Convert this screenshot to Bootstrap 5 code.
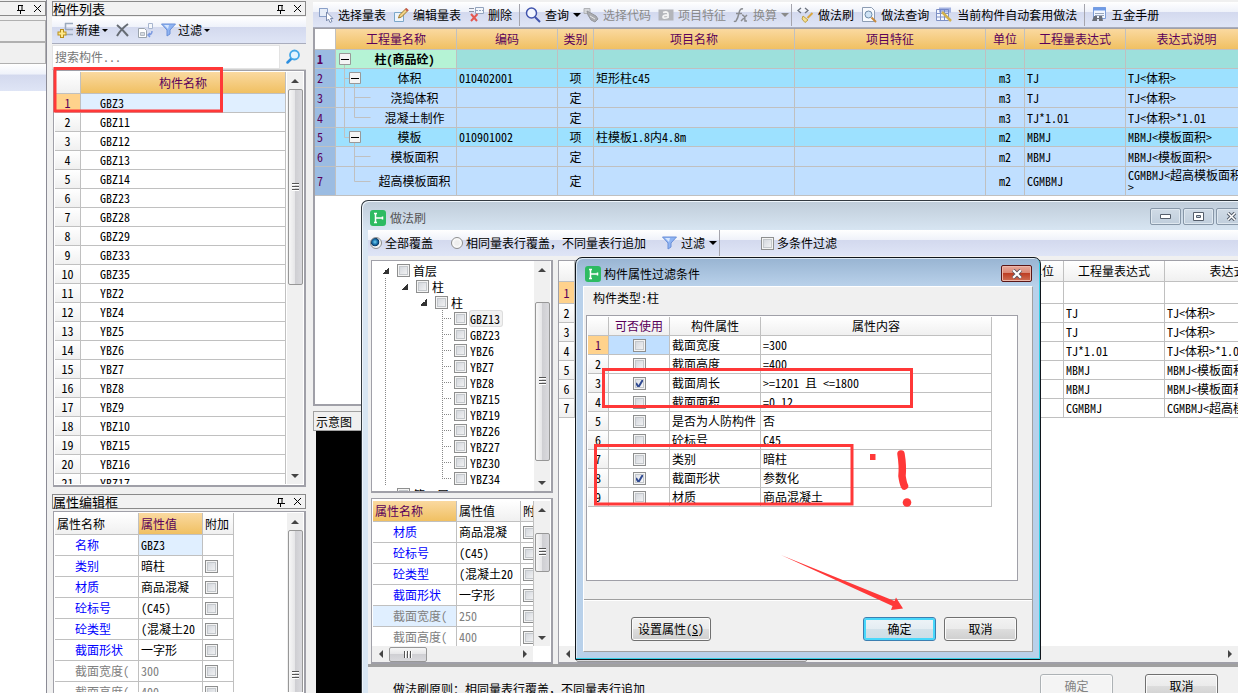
<!DOCTYPE html>
<html lang="zh-CN">
<head>
<meta charset="utf-8">
<meta name="viewport" content="width=device-width, initial-scale=1">
<title>做法刷</title>
<link href="https://cdn.jsdelivr.net/npm/bootstrap@5.3.0/dist/css/bootstrap.min.css" rel="stylesheet">
<style>
:root{--line:#c0c0c0;--edge:#a0a0a8;--face:#f0f0f0;--orange:linear-gradient(#fad9a0,#f0c062);--grey:linear-gradient(#fff,#f0f0f0);--tool:linear-gradient(#fff 0,#eff2fa 38%,#d3d9ee 40%,#dfe5f6 100%)}
body{height:100vh;overflow:hidden;position:relative;background:var(--face);color:#000;font:12px/14px "Noto Sans CJK SC",sans-serif;font-feature-settings:"hwid"}
.fullpunct{font-feature-settings:normal}
button,input{font-feature-settings:inherit}
svg{display:block;flex:none}
/* columns */
.col-edge{width:47px;flex:none;border-right:1px solid #8b8b95}
.col-side{width:254px;flex:none;margin-left:5px}
.col-main{margin-left:7px;padding-top:2px;min-width:0}
.pane-title{height:15px;flex:none;border:1px solid #8a8a8a;background:#f2f2f2;font-size:13px;line-height:13px;padding-right:3px}
.pane-title h2{font:inherit;margin:0}
.col-edge .pane-title{margin-top:1px;border-left:0}
.col-side>.pane-title:first-child{margin-top:1px}
.col-side>.prop-title{margin:7px 0 2px}
.title-btns{gap:8px}
.bare{border:0;background:none;padding:0;color:inherit}
.edge-box{height:22px;border:1px solid #b0b0b0;border-left:0}
.toolbar-strip{background:var(--tool)}
.edge-strip{height:27px}
.list-tools{height:27px;margin-top:1px;border-bottom:1px solid #a9adbd;padding-left:5px}
.main-tools{height:26px;border-bottom:1px solid #a9adbd;padding-left:5px;flex:none}
.btn.tool{--bs-btn-padding-x:0;--bs-btn-padding-y:0;--bs-btn-font-size:12px;--bs-btn-line-height:14px;--bs-btn-color:#000;--bs-btn-border-width:0;--bs-btn-disabled-color:#8a8a8a;--bs-btn-disabled-opacity:1;display:flex;align-items:center;gap:4px;white-space:nowrap;margin-right:7px}
.btn.tool.menu{margin-right:2px}
.list-tools .btn.tool{gap:2px}
.caret{width:0;height:0;border:4px solid transparent;border-top-color:currentColor;border-bottom:0}
.caret.sm{border-width:3px 3px 0}
.vsep{width:1px;height:22px;background:#a5a5ad;margin-right:5px}
.searchrow{height:26px;border-bottom:1px solid #d0d0d0}
.searchrow input{border:1px solid #e3e3e3;height:24px;width:228px;padding:0 2px;font-size:12px;background:#fff}
.searchrow input::placeholder{color:#777;opacity:1}
.frame{border:1px solid var(--edge);background:#fff;overflow:hidden;min-height:0}
.deep{border-width:1px 2px 2px 1px}
.list-frame{margin-left:1px;padding:1px}
.list-frame .vbar{margin-left:1px}
/* grids */
table.grid{border-collapse:separate;border-spacing:0;table-layout:fixed;width:100%;margin:0;line-height:12px}
.grid th,.grid td{border:0 solid var(--line);border-width:0 1px 1px 0;padding:0 2px;height:19px;font-weight:400;white-space:nowrap;overflow:hidden;vertical-align:middle}
.grid thead th{background:var(--grey);text-align:center}
.grid tbody th{background:var(--grey);text-align:center}
.grid thead th.hot{background:var(--orange);color:#5a005a}
.grid tbody th.hot{background:#ffd28c;color:#5a005a}
.grid td.sel{background:#e0efff}
.grid .pickcell{background:#c0dfff}
.g-list thead th{height:22px}
.g-list td{padding-left:19px}
.g-prop th,.g-prop td{height:21px}
.g-prop thead th{text-align:left}
.g-prop td:first-child{padding-left:20px;color:#00f}
.g-prop .dim td{color:#808080}
.g-prop td:last-child{padding-left:2px}
table.side-prop{width:179px}
.side-prop thead th{height:22px}
.c26{width:26px}.c84{width:84px}.c64{width:64px}.c31{width:31px}.c21{width:21px}.c121{width:121px}.c101{width:101px}.c36{width:36px}.c201{width:201px}.c191{width:191px}.c39{width:39px}.c13{width:13px}.c61{width:61px}.c91{width:91px}.c16{width:16px}.c43{width:43px}.c150{width:150px}
table.g-main{width:calc(100% + 10px)}
.g-main thead th{background:var(--orange);color:#5a005a;height:21px}
.g-main thead th:first-child{background:#fff}
.g-main tbody th{background:#9bbce2;color:#5a005a;text-align:left}
.g-main td{background:#c0dfff}
.g-main td:nth-child(2){padding:0}
.g-main td:nth-child(9){white-space:normal}
.g-main .top td{background:#9de0dc}
.g-main .top td:nth-child(2){background:#b5f3d5}
.g-main .item td{background:#9de1ff}
.g-main .tall td,.g-main .tall th{height:20px}
.g-main .wrap2 td,.g-main .wrap2 th{height:29px}
.g-main .top td,.g-main .top th{font-weight:700}
.tn{display:flex;align-items:center}
.tn span{flex:1;text-align:center}
.tn svg{stroke:var(--line);fill:none}
.main-frame{flex:1 1 0;border-width:1px 0 2px 2px}
.g-brush thead th{height:21px}
.g-brush tbody tr:first-child>*{height:22px}
table.g-brush{width:756px}
.g-filter thead th{height:19px}
.g-filter .purple{color:#5a005a}
/* check boxes and radios */
.cbx{appearance:none;display:block;flex:none;width:13px;height:13px;margin:0;border:1px solid #8e8f8f;box-shadow:inset 0 0 0 1px #f4f4f4,inset 0 0 0 2px #c4c8cc;background:linear-gradient(135deg,#cdd1d8,#f8f8f8)}
.cbx:checked{background:url("data:image/svg+xml,%3Csvg xmlns='http://www.w3.org/2000/svg' viewBox='0 0 11 11'%3E%3Cpath d='M2 5 4.500 9 9 1.500' fill='none' stroke='%23314b92' stroke-width='2'/%3E%3C/svg%3E") center/11px no-repeat,linear-gradient(135deg,#d6dae2,#fff)}
.grid .cbx.mid{margin:0 auto}
.rad{appearance:none;width:12px;height:12px;margin:0;border:1px solid #8e8f8f;border-radius:50%;background:radial-gradient(#eee 30%,#fafafa 60%)}
.rad:checked{background:radial-gradient(circle at 40% 40%,#6fd3f5 0,#1b6fa8 30%,#0b3a66 45%,#f4f4f4 55%)}
/* scroll bars */
.vbar{width:16px;flex:none;background:#f0f0f0;display:flex;flex-direction:column;align-items:center}
.hbar{height:16px;flex:none;background:#f0f0f0;display:flex;align-items:center}
.arw{flex:0 0 17px;width:17px;display:flex;align-items:center;justify-content:center}
.arw::before{content:"";border:4px solid transparent}
.arw.up::before{border-bottom-color:#444;border-top:0}
.arw.dn::before{border-top-color:#444;border-bottom:0}
.arw.lf::before{border-right-color:#444;border-left:0}
.arw.rt::before{border-left-color:#444;border-right:0}
.thumb{border:1px solid #979797;border-radius:2px;display:flex;align-items:center;justify-content:center}
.vbar .thumb{width:15px;background:linear-gradient(90deg,#f7f7f7 0,#e6e6e8 45%,#cfcfd3 50%,#dadade)}
.hbar .thumb{height:15px;background:linear-gradient(#f7f7f7 0,#e6e6e8 45%,#cfcfd3 50%,#dadade)}
.vbar .thumb::before{content:"";width:7px;height:8px;background:repeating-linear-gradient(#555 0 1px,#fff 1px 2px,transparent 2px 3px)}
.hbar .thumb::before{content:"";width:8px;height:7px;background:repeating-linear-gradient(90deg,#555 0 1px,#fff 1px 2px,transparent 2px 3px)}
.f195{flex:195}.f183{flex:183}.f24{flex:24}.f158{flex:158}.f14{flex:14}.f37{flex:37}.f56{flex:56}.f290{flex:0 0 290px}.f39{flex:39}.f98{flex:98}.f232{flex:232}.f420{flex:420}
.r418{flex:418 1 0}.r181{flex:181 1 0}.r234{flex:234 1 0}.r165{flex:165 1 0}
.me-1px{margin-right:1px}
.hb-left{margin-right:18px}
/* windows */
.win-brush{position:absolute;left:361px;top:200px;right:0;bottom:0;border:1px solid #333a40;border-width:1px 0 0 1px;border-top-left-radius:7px;background:linear-gradient(#bfccd9,#d8e6f3 30px);padding-left:6px;box-shadow:inset 1px 1px 0 #eef5fb;overflow:hidden}
.win-title{height:29px;gap:4px}
.win-title h1{font:inherit;margin:0}
.win-brush .win-title{padding-left:2px;color:#555;padding-top:4px}
.win-btns{gap:2px;margin-right:-9px;margin-bottom:2px}
.wbtn{width:31px;height:17px;border:1px solid #8797a8;border-radius:2px;background:linear-gradient(#d0dbe6,#c0cedc);box-shadow:inset 0 0 0 1px #dfe8f0;padding:0;display:flex;align-items:center;justify-content:center}
.brush-bar{height:26px;padding-left:2px;white-space:nowrap;flex:none}
.brush-bar label{margin-left:3px}
.brush-bar .gap-mode{margin-left:18px}
.brush-bar .gap-filter{margin-left:16px}
.brush-bar .gap-multi{margin-left:36px}
.brush-body{background:var(--face);padding-top:4px;min-height:0}
.split-left{width:182px;margin-left:3px;gap:5px}
.split-right{margin-left:5px;min-width:0}
.prop-scroll{padding:2px 0 0 1px;min-height:0}
.tree,.tree ul{list-style:none;margin:0;padding:0}
.tree{padding:1px 0 0 10px;white-space:nowrap}
.nodeline{height:16px;display:flex;align-items:center;gap:3px}
.tree label{line-height:15px}
.tri{width:7px;height:7px;margin-right:5px;background:linear-gradient(135deg,transparent 50%,#333 50%)}
.tree .lv1{margin-left:3px;padding-left:16px;background:repeating-linear-gradient(#888 0 1px,#fff 1px 2px) 0 0/1px 100% no-repeat}
.tree .lv2{margin-left:19px}
.tree .lv3{margin-left:22px;background:repeating-linear-gradient(#888 0 1px,#fff 1px 2px) 0 0/1px calc(100% - 8px) no-repeat}
.lv3 .nodeline::before{content:"";width:9px;border-top:1px dotted #888}
.picked{background:#f1f1f1;box-shadow:0 0 0 1px #ddd;border-radius:2px;padding-right:2px}
.brush-foot{height:29px;flex:none;border-top:3px solid #a0a0a0;background:var(--face);padding:7px 20px 0 25px;gap:32px;overflow:hidden;white-space:nowrap}
.brush-foot .note{padding-top:8px}
.btn.push{--bs-btn-padding-x:0;--bs-btn-padding-y:0;--bs-btn-font-size:12px;--bs-btn-line-height:20px;--bs-btn-border-radius:3px;--bs-btn-border-color:#707070;--bs-btn-color:#000;--bs-btn-disabled-color:#838383;--bs-btn-disabled-border-color:#adb2b5;--bs-btn-disabled-bg:#f4f4f4;--bs-btn-disabled-opacity:1;width:73px;height:24px;flex:none;background:linear-gradient(#f2f2f2 0,#ebebeb 50%,#dddddd 51%,#cfcfcf 100%);box-shadow:inset 0 0 0 1px #fbfbfb}
.btn.push:disabled{background:#f4f4f4}
.btn.push.wide{width:80px}
.btn.push.go{border-color:#3c7fb1;background:linear-gradient(#eef4f8 0,#e4edf2 50%,#d3e2ea 51%,#cbdde6 100%);box-shadow:inset 0 0 0 2px #48d8fb}
.win-filter{position:absolute;left:575px;top:257px;width:466px;border:1px solid #10161c;border-radius:7px 7px 0 0;background:linear-gradient(#98b4d2,#b9d1ea 28px);padding:0 7px 7px;box-shadow:inset -1px -1px 0 #35d0e6,inset 1px 1px 0 #dce9f5}
.win-filter .win-title{height:28px;gap:3px;padding:3px 1px 0 2px}
.wbtn.closebtn{border:1px solid #5a1616;background:linear-gradient(#e8a99b 0,#d98572 48%,#bd3e24 50%,#cf6f55 100%);box-shadow:inset 0 0 0 1px #edb7aa}
.filter-body{background:var(--face);border:1px solid #a0a0a0;border-top-color:#fff;border-left-color:#fff}
.kind{height:28px;padding:4px 9px}
.filter-frame{height:266px;margin:0 14px 18px 2px;padding:1px}
.filter-frame table.grid{width:404px}
.filter-foot{border-top:1px solid #a0a0a0;box-shadow:inset 0 1px 0 #fff;padding:17px 15px 10px 47px;gap:8px}
.sketch{position:absolute;left:0;top:0;pointer-events:none;overflow:visible}
.tab-head{height:20px;border:1px solid #a0a0a0;padding:3px 2px;margin-top:5px;flex:none}
.preview{flex:0 0 262px;background:#000;margin-left:3px}
</style>
</head>
<body class="d-flex">

<aside class="col-edge d-flex flex-column">
  <div class="pane-title d-flex align-items-center justify-content-end title-btns">
    <button class="bare" aria-label="固定"><svg width="9" height="10" viewBox="0 0 9 10"><path d="M2.500 1v5M2 1.500h5M6 1v5M1 6.500h8M4.500 7v3" stroke="#000" fill="none"/></svg></button>
    <button class="bare" aria-label="关闭"><svg width="9" height="9" viewBox="0 0 9 9"><path d="M1 1l7 7M8 1l-7 7" stroke="#000" fill="none"/></svg></button>
  </div>
  <div class="edge-box mt-1"></div>
  <div class="edge-box"></div>
  <div class="toolbar-strip edge-strip"></div>
  <div class="bg-white flex-fill"></div>
</aside>

<aside class="col-side d-flex flex-column">
  <div class="pane-title d-flex align-items-center justify-content-between">
    <h2>构件列表</h2>
    <div class="d-flex title-btns">
      <button class="bare" aria-label="固定"><svg width="9" height="10" viewBox="0 0 9 10"><path d="M2.500 1v5M2 1.500h5M6 1v5M1 6.500h8M4.500 7v3" stroke="#000" fill="none"/></svg></button>
      <button class="bare" aria-label="关闭"><svg width="9" height="9" viewBox="0 0 9 9"><path d="M1 1l7 7M8 1l-7 7" stroke="#000" fill="none"/></svg></button>
    </div>
  </div>
  <div class="toolbar-strip list-tools d-flex align-items-center">
    <button class="btn tool"><svg width="17" height="16" viewBox="0 0 17 16"><path d="M8 1.500h8M8 7.500h8M8 12.500h8M8.500 1v6" stroke="#9aa9bd" fill="none" stroke-width="1.500"/><path d="M5 7v9M.5 11.500h9" stroke="#b98f1c" stroke-width="4"/><path d="M5 8v7M1.500 11.500h7" stroke="#ffe98a" stroke-width="2"/></svg><span>新建</span><span class="caret sm"></span></button>
    <button class="btn tool" aria-label="删除"><svg width="15" height="15" viewBox="0 0 15 15"><path d="M2 2q6 5 11 11M13 1Q6 6 2 13" stroke="#666c74" stroke-width="2" fill="none"/></svg></button>
    <button class="btn tool" aria-label="复制"><svg width="17" height="15" viewBox="0 0 17 15"><path d="M1.500 5.500h6l2 2v7h-8z" fill="#fff" stroke="#9aa3ad"/><path d="M3.500 9.500h4v3h-4z" fill="#d5dae0" stroke="#b4bac2"/><path d="M11.500.5h4v5h-4z" fill="#f6f8fb" stroke="#a7b5cf"/><path d="M15 8q0 4-4 4M13 10l-2 2 2 2" stroke="#7d9be0" fill="none" stroke-width="1.500"/></svg></button>
    <button class="btn tool"><svg width="15" height="14" viewBox="0 0 15 14"><path d="M.5 1h14L9 7v4l-3 2V7z" fill="#8fb4f2" stroke="#6a8fd8"/><path d="M3 2h5L7 6z" fill="#d6e6ff"/></svg><span>过滤</span><span class="caret sm"></span></button>
  </div>
  <div class="searchrow d-flex align-items-center justify-content-between">
    <input type="search" placeholder="搜索构件..." aria-label="搜索构件">
    <button class="bare pe-1" aria-label="搜索"><svg width="16" height="16" viewBox="0 0 16 16"><path d="M5.500 9.500l-4 4" stroke="#2d8fe0" stroke-width="2.500" stroke-linecap="round"/><circle cx="8.500" cy="6" r="4.500" fill="#e4f5ff" stroke="#45a9e8" stroke-width="1.800"/></svg></button>
  </div>
  <div class="frame deep r418 d-flex list-frame">
    <div class="overflow-hidden flex-fill">
    <table class="grid g-list">
      <colgroup><col class="c26"><col></colgroup>
      <thead><tr><th></th><th class="hot" scope="col">构件名称</th></tr></thead>
      <tbody>
        <tr><th class="hot">1</th><td class="sel">GBZ3</td></tr>
        <tr><th>2</th><td>GBZ11</td></tr>
        <tr><th>3</th><td>GBZ12</td></tr>
        <tr><th>4</th><td>GBZ13</td></tr>
        <tr><th>5</th><td>GBZ14</td></tr>
        <tr><th>6</th><td>GBZ23</td></tr>
        <tr><th>7</th><td>GBZ28</td></tr>
        <tr><th>8</th><td>GBZ29</td></tr>
        <tr><th>9</th><td>GBZ33</td></tr>
        <tr><th>10</th><td>GBZ35</td></tr>
        <tr><th>11</th><td>YBZ2</td></tr>
        <tr><th>12</th><td>YBZ4</td></tr>
        <tr><th>13</th><td>YBZ5</td></tr>
        <tr><th>14</th><td>YBZ6</td></tr>
        <tr><th>15</th><td>YBZ7</td></tr>
        <tr><th>16</th><td>YBZ8</td></tr>
        <tr><th>17</th><td>YBZ9</td></tr>
        <tr><th>18</th><td>YBZ10</td></tr>
        <tr><th>19</th><td>YBZ15</td></tr>
        <tr><th>20</th><td>YBZ16</td></tr>
        <tr><th>21</th><td>YBZ17</td></tr>
      </tbody>
    </table>
    </div>
    <div class="vbar"><span class="arw up"></span><span class="thumb f195"></span><span class="f183"></span><span class="arw dn"></span></div>
  </div>
  <div class="pane-title d-flex align-items-center justify-content-between prop-title">
    <h2>属性编辑框</h2>
    <div class="d-flex title-btns">
      <button class="bare" aria-label="固定"><svg width="9" height="10" viewBox="0 0 9 10"><path d="M2.500 1v5M2 1.500h5M6 1v5M1 6.500h8M4.500 7v3" stroke="#000" fill="none"/></svg></button>
      <button class="bare" aria-label="关闭"><svg width="9" height="9" viewBox="0 0 9 9"><path d="M1 1l7 7M8 1l-7 7" stroke="#000" fill="none"/></svg></button>
    </div>
  </div>
  <div class="frame deep r181 d-flex list-frame border-bottom-0">
    <div class="overflow-hidden flex-fill">
    <table class="grid g-prop side-prop">
      <colgroup><col class="c84"><col class="c64"><col class="c31"></colgroup>
      <thead><tr><th>属性名称</th><th class="hot">属性值</th><th>附加</th></tr></thead>
      <tbody>
        <tr><td>名称</td><td class="sel">GBZ3</td><td></td></tr>
        <tr><td>类别</td><td>暗柱</td><td><input type="checkbox" class="cbx" aria-label="附加 类别"></td></tr>
        <tr><td>材质</td><td>商品混凝</td><td><input type="checkbox" class="cbx" aria-label="附加 材质"></td></tr>
        <tr><td>砼标号</td><td>(C45)</td><td><input type="checkbox" class="cbx" aria-label="附加 砼标号"></td></tr>
        <tr><td>砼类型</td><td>(混凝土20</td><td><input type="checkbox" class="cbx" aria-label="附加 砼类型"></td></tr>
        <tr><td>截面形状</td><td>一字形</td><td><input type="checkbox" class="cbx" aria-label="附加 截面形状"></td></tr>
        <tr class="dim"><td>截面宽度(</td><td>300</td><td><input type="checkbox" class="cbx" aria-label="附加 截面宽度"></td></tr>
        <tr class="dim"><td>截面高度(</td><td>400</td><td><input type="checkbox" class="cbx" aria-label="附加 截面高度"></td></tr>
      </tbody>
    </table>
    </div>
    <div class="vbar overflow-hidden"><span class="arw up"></span><span class="thumb f290"></span></div>
  </div>
</aside>

<main class="col-main flex-fill d-flex flex-column">
  <div class="toolbar-strip main-tools d-flex align-items-center">
    <button class="btn tool"><svg width="16" height="16" viewBox="0 0 16 16"><path d="M1.500 1v9M1.500 1.500h8v8h-8" stroke="#8aa0c8" fill="#e6edf8"/><path d="M8.500 5v9l2-2 1.500 3.500 2-1-1.500-3h2.500z" fill="#fff" stroke="#7c8cae"/></svg>选择量表</button>
    <button class="btn tool"><svg width="16" height="16" viewBox="0 0 16 16"><path d="M1.500 5.500h9v9h-9z" fill="#eef4fb" stroke="#7ca7c9"/><path d="M5.500 11l1-3 6.500-6.500 2 2L8.500 10z" fill="#f2d489" stroke="#a07a2c"/><path d="M12 2.500l2 2 1.500-1.500-2-2z" fill="#c9574e"/></svg>编辑量表</button>
    <button class="btn tool"><svg width="16" height="16" viewBox="0 0 16 16"><path d="M1 1.500h5M1 4.500h5" stroke="#8a93a5"/><path d="M7.500.5h8v6h-8z" fill="#f3f6fb" stroke="#93a3bd"/><path d="M8 3.500h7" stroke="#93a3bd" stroke-dasharray="2 1"/><path d="M3 7l6 7M9.500 7L3 14" stroke="#e4574f" stroke-width="2"/></svg>删除</button>
    <span class="vsep"></span>
    <button class="btn tool menu"><svg width="16" height="16" viewBox="0 0 16 16"><circle cx="6.500" cy="6" r="5" fill="#f2f6ff" stroke="#4053ad" stroke-width="1.500"/><path d="M10 10l5 5" stroke="#4053ad" stroke-width="2"/></svg>查询<span class="caret"></span></button>
    <button class="btn tool" disabled><svg width="16" height="16" viewBox="0 0 16 16"><path d="M1 1.500h6v5H1z" fill="#d5d7db" stroke="#b0b2b6"/><path d="M4 4l9 5 2 3-3 3-4-2-3-5z" fill="#a9abb0" stroke="#94969b"/><path d="M7 9l5 3" stroke="#e6e6e6"/></svg>选择代码</button>
    <button class="btn tool" disabled><svg width="16" height="16" viewBox="0 0 16 16"><path d="M.5 2.500h15v11H.5z" fill="#b3b5ba"/><path d="M5 5.500q5-1.500 5 1.500v4M10 8q-5 0-5 2t5 .5" stroke="#f4f4f4" stroke-width="1.800" fill="none"/></svg>项目特征</button>
    <button class="btn tool menu" disabled><svg width="16" height="16" viewBox="0 0 16 16"><path d="M10 2q-3-1-4 4T3 14q-1 1-2 0M3 6.500h6M9 8q3 0 3 6h2M14 8l-6 6" stroke="#8b8d92" stroke-width="1.500" fill="none"/></svg>换算<span class="caret"></span></button>
    <span class="vsep"></span>
    <button class="btn tool"><svg width="17" height="16" viewBox="0 0 17 16"><path d="M4 1L1 3.500 4 6M8 1l3 2.500L8 6" stroke="#6d747f" stroke-width="1.300" fill="none"/><path d="M15.500 6l-5 5" stroke="#d9a640" stroke-width="2"/><path d="M6 9l5 4-3 2.500L5 12z" fill="#f6e08c" stroke="#bfa04a"/></svg>做法刷</button>
    <button class="btn tool"><svg width="16" height="16" viewBox="0 0 16 16"><path d="M1.500.5h9l3 3v11h-12z" fill="#f7fafe" stroke="#8d9db3"/><circle cx="7.500" cy="7.500" r="3.500" fill="#cfe3f5" stroke="#6e8aa8"/><path d="M10.500 10.500l4.500 4.500" stroke="#c98a3c" stroke-width="2"/></svg>做法查询</button>
    <button class="btn tool"><svg width="17" height="16" viewBox="0 0 17 16"><path d="M.5 2.500h12v11H.5zM4.500 2.500v11M8.500 2.500v11M.5 6.500h12M.5 10h12" fill="#f4f7ff" stroke="#7e90c4"/><path d="M3 .5h12v5H3z" fill="#6e86cf" opacity=".6"/><path d="M6 5l9 9" stroke="#d3b14e" stroke-width="2.500"/></svg>当前构件自动套用做法</button>
    <span class="vsep"></span>
    <button class="btn tool"><svg width="17" height="16" viewBox="0 0 17 16"><path d="M3.500.5h12v11h-12z" fill="#f2f7ff" stroke="#7f9fd8"/><path d="M3 .5h13v3H3z" fill="#6f9be6"/><path d="M5 6.500h9M5 8.500h9" stroke="#9aa7bd"/><path d="M4 9h3v2h2V9h3l1 5H9v-2H7v2H2z" fill="#6a6f78"/></svg>五金手册</button>
  </div>
  <div class="frame main-frame">
    <table class="grid g-main">
      <colgroup><col class="c21"><col class="c121"><col class="c101"><col class="c36"><col class="c201"><col class="c191"><col class="c39"><col class="c101"><col></colgroup>
      <thead><tr><th></th><th>工程量名称</th><th>编码</th><th>类别</th><th>项目名称</th><th>项目特征</th><th>单位</th><th>工程量表达式</th><th>表达式说明</th></tr></thead>
      <tbody>
        <tr class="top"><th>1</th><td><div class="tn"><svg width="17" height="18"><path d="M8.500 15v3"/><path d="M3.500 3.500h11v11h-11z" fill="#f4f4f4" stroke="#999"/><path d="M5 9.500h8" stroke="#000"/></svg><span>柱(商品砼)</span></div></td><td></td><td></td><td></td><td></td><td></td><td></td><td></td></tr>
        <tr class="item"><th>2</th><td><div class="tn"><svg width="27" height="18"><path d="M8.500 0v18M8.500 9.500h5M18.500 15v3"/><path d="M13.500 3.500h11v11h-11z" fill="#f4f4f4" stroke="#999"/><path d="M15 9.500h8" stroke="#000"/></svg><span>体积</span></div></td><td>010402001</td><td class="text-center">项</td><td>矩形柱c45</td><td></td><td class="text-center">m3</td><td>TJ</td><td>TJ&lt;体积&gt;</td></tr>
        <tr class="tall"><th>3</th><td><div class="tn"><svg width="37" height="19"><path d="M8.500 0v19M18.500 0v19M18.500 9.500h16"/></svg><span>浇捣体积</span></div></td><td></td><td class="text-center">定</td><td></td><td></td><td class="text-center">m3</td><td>TJ</td><td>TJ&lt;体积&gt;</td></tr>
        <tr class="tall"><th>4</th><td><div class="tn"><svg width="37" height="19"><path d="M8.500 0v19M18.500 0v9.500h16"/></svg><span>混凝土制作</span></div></td><td></td><td class="text-center">定</td><td></td><td></td><td class="text-center">m3</td><td>TJ*1.01</td><td>TJ&lt;体积&gt;*1.01</td></tr>
        <tr class="item"><th>5</th><td><div class="tn"><svg width="27" height="18"><path d="M8.500 0v9.500h5M18.500 15v3"/><path d="M13.500 3.500h11v11h-11z" fill="#f4f4f4" stroke="#999"/><path d="M15 9.500h8" stroke="#000"/></svg><span>模板</span></div></td><td>010901002</td><td class="text-center">项</td><td>柱模板1.8内4.8m</td><td></td><td class="text-center">m2</td><td>MBMJ</td><td>MBMJ&lt;模板面积&gt;</td></tr>
        <tr class="tall"><th>6</th><td><div class="tn"><svg width="37" height="19"><path d="M18.500 0v19M18.500 9.500h16"/></svg><span>模板面积</span></div></td><td></td><td class="text-center">定</td><td></td><td></td><td class="text-center">m2</td><td>MBMJ</td><td>MBMJ&lt;模板面积&gt;</td></tr>
        <tr class="wrap2"><th>7</th><td><div class="tn"><svg width="37" height="28"><path d="M18.500 0v14.500h16"/></svg><span>超高模板面积</span></div></td><td></td><td class="text-center">定</td><td></td><td></td><td class="text-center">m2</td><td>CGMBMJ</td><td>CGMBMJ&lt;超高模板面积<wbr>&gt;</td></tr>
      </tbody>
    </table>
  </div>
  <div class="tab-head">示意图</div>
  <div class="preview"></div>
</main>

<section class="win-brush d-flex flex-column" aria-label="做法刷">
  <div class="win-title d-flex align-items-center flex-shrink-0">
    <svg width="16" height="16" viewBox="0 0 16 16"><rect width="16" height="16" rx="3" fill="#2dbb62"/><path d="M4 3.500h3M5.500 3.500v9M4 12.500h3M5.500 8h7M12.500 6.500v3" stroke="#fff" stroke-width="1.500" fill="none"/></svg>
    <h1>做法刷</h1>
    <div class="d-flex ms-auto win-btns">
      <button class="wbtn" aria-label="最小化"><svg width="11" height="5"><path d="M.5.5h10v4H.5z" fill="#fff" stroke="#555e6b"/></svg></button>
      <button class="wbtn" aria-label="最大化"><svg width="11" height="9"><path d="M.5.5h10v8H.5z" fill="#fff" stroke="#555e6b"/><path d="M3.500 3.500h4v2h-4z" fill="#c5d2df" stroke="#555e6b"/></svg></button>
      <button class="wbtn" aria-label="关闭"><svg width="11" height="9" viewBox="0 0 11 9"><path d="M2 1l7 7M9 1L2 8" stroke="#555e6b" stroke-width="3.500"/><path d="M2 1l7 7M9 1L2 8" stroke="#fff" stroke-width="1.500"/></svg></button>
    </div>
  </div>
  <div class="toolbar-strip brush-bar d-flex align-items-center">
    <input type="radio" class="rad" name="mode" id="m1" checked><label for="m1">全部覆盖</label>
    <input type="radio" class="rad gap-mode" name="mode" id="m2"><label for="m2" class="fullpunct">相同量表行覆盖，不同量表行追加</label>
    <button class="btn tool menu gap-filter"><svg width="15" height="14" viewBox="0 0 15 14"><path d="M.5 1h14L9 7v4l-3 2V7z" fill="#8fb4f2" stroke="#6a8fd8"/><path d="M3 2h5L7 6z" fill="#d6e6ff"/></svg>过滤<span class="caret"></span></button>
    <span class="vsep h-100"></span>
    <input type="checkbox" class="cbx gap-multi" id="multi"><label for="multi">多条件过滤</label>
  </div>
  <div class="brush-body d-flex flex-fill">
    <div class="split-left d-flex flex-column flex-shrink-0">
      <div class="frame deep r234 d-flex">
        <ul class="tree flex-fill overflow-hidden">
          <li><div class="nodeline"><span class="tri"></span><input type="checkbox" class="cbx" id="n1"><label for="n1">首层</label></div>
            <ul class="lv1"><li><div class="nodeline"><span class="tri"></span><input type="checkbox" class="cbx" id="n2"><label for="n2">柱</label></div>
              <ul class="lv2"><li><div class="nodeline"><span class="tri"></span><input type="checkbox" class="cbx" id="n3"><label for="n3">柱</label></div>
                <ul class="lv3">
                  <li class="nodeline"><input type="checkbox" class="cbx" id="a1"><label for="a1" class="picked">GBZ13</label></li>
                  <li class="nodeline"><input type="checkbox" class="cbx" id="a2"><label for="a2">GBZ23</label></li>
                  <li class="nodeline"><input type="checkbox" class="cbx" id="a3"><label for="a3">YBZ6</label></li>
                  <li class="nodeline"><input type="checkbox" class="cbx" id="a4"><label for="a4">YBZ7</label></li>
                  <li class="nodeline"><input type="checkbox" class="cbx" id="a5"><label for="a5">YBZ8</label></li>
                  <li class="nodeline"><input type="checkbox" class="cbx" id="a6"><label for="a6">YBZ15</label></li>
                  <li class="nodeline"><input type="checkbox" class="cbx" id="a7"><label for="a7">YBZ19</label></li>
                  <li class="nodeline"><input type="checkbox" class="cbx" id="a8"><label for="a8">YBZ26</label></li>
                  <li class="nodeline"><input type="checkbox" class="cbx" id="a9"><label for="a9">YBZ27</label></li>
                  <li class="nodeline"><input type="checkbox" class="cbx" id="a10"><label for="a10">YBZ30</label></li>
                  <li class="nodeline"><input type="checkbox" class="cbx" id="a11"><label for="a11">YBZ34</label></li>
                </ul></li></ul></li></ul></li>
          <li><div class="nodeline"><span class="tri"></span><input type="checkbox" class="cbx" id="n4"><label for="n4">第-1层</label></div></li>
        </ul>
        <div class="vbar me-1px"><span class="arw up"></span><span class="f24"></span><span class="thumb f158"></span><span class="f14"></span><span class="arw dn"></span></div>
      </div>
      <div class="frame deep r165 d-flex flex-column">
        <div class="d-flex flex-fill overflow-hidden prop-scroll">
          <div class="flex-fill overflow-hidden">
          <table class="grid g-prop">
            <colgroup><col class="c84"><col class="c64"><col class="c13"></colgroup>
            <thead><tr><th class="hot">属性名称</th><th>属性值</th><th>附</th></tr></thead>
            <tbody>
              <tr><td>材质</td><td>商品混凝</td><td><input type="checkbox" class="cbx" aria-label="附加 材质"></td></tr>
              <tr><td>砼标号</td><td>(C45)</td><td><input type="checkbox" class="cbx" aria-label="附加 砼标号"></td></tr>
              <tr><td>砼类型</td><td>(混凝土20</td><td><input type="checkbox" class="cbx" aria-label="附加 砼类型"></td></tr>
              <tr><td>截面形状</td><td>一字形</td><td><input type="checkbox" class="cbx" aria-label="附加 截面形状"></td></tr>
              <tr class="dim"><td class="sel">截面宽度(</td><td>250</td><td><input type="checkbox" class="cbx" aria-label="附加 截面宽度"></td></tr>
              <tr class="dim"><td>截面高度(</td><td>400</td><td><input type="checkbox" class="cbx" aria-label="附加 截面高度"></td></tr>
            </tbody>
          </table>
          </div>
          <div class="vbar me-1px"><span class="arw up"></span><span class="f14"></span><span class="thumb f37"></span><span class="f56"></span><span class="arw dn"></span></div>
        </div>
        <div class="hbar hb-left"><span class="arw lf"></span><span class="thumb f39"></span><span class="f98"></span><span class="arw rt"></span></div>
      </div>
    </div>
    <div class="frame deep split-right flex-fill d-flex flex-column border-end-0">
      <div class="flex-fill overflow-hidden">
      <table class="grid g-brush">
        <colgroup><col class="c16"><col><col class="c43"><col class="c101"><col class="c150"></colgroup>
        <thead><tr><th></th><th></th><th>单位</th><th>工程量表达式</th><th>表达式说明</th></tr></thead>
        <tbody>
          <tr><th class="hot">1</th><td></td><td></td><td></td><td></td></tr>
          <tr><th>2</th><td></td><td></td><td>TJ</td><td>TJ&lt;体积&gt;</td></tr>
          <tr><th>3</th><td></td><td></td><td>TJ</td><td>TJ&lt;体积&gt;</td></tr>
          <tr><th>4</th><td></td><td></td><td>TJ*1.01</td><td>TJ&lt;体积&gt;*1.01</td></tr>
          <tr><th>5</th><td></td><td></td><td>MBMJ</td><td>MBMJ&lt;模板面积&gt;</td></tr>
          <tr><th>6</th><td></td><td></td><td>MBMJ</td><td>MBMJ&lt;模板面积&gt;</td></tr>
          <tr><th>7</th><td></td><td></td><td>CGMBMJ</td><td>CGMBMJ&lt;超高模板面积&gt;</td></tr>
        </tbody>
      </table>
      </div>
      <div class="hbar"><span class="arw lf"></span><span class="thumb f232"></span><span class="f420"></span><span class="arw rt"></span></div>
    </div>
  </div>
  <div class="brush-foot d-flex">
    <span class="fullpunct flex-fill note">做法刷原则：相同量表行覆盖，不同量表行追加</span>
    <button class="btn push" disabled>确定</button>
    <button class="btn push">取消</button>
  </div>
</section>

<section class="win-filter" role="dialog" aria-label="构件属性过滤条件">
  <div class="win-title d-flex align-items-center">
    <svg width="16" height="16" viewBox="0 0 16 16"><rect width="16" height="16" rx="3" fill="#2dbb62"/><path d="M4 3.500h3M5.500 3.500v9M4 12.500h3M5.500 8h7M12.500 6.500v3" stroke="#fff" stroke-width="1.500" fill="none"/></svg>
    <h1>构件属性过滤条件</h1>
    <button class="wbtn closebtn ms-auto" aria-label="关闭"><svg width="12" height="10" viewBox="0 0 11 9"><path d="M2 1l7 7M9 1L2 8" stroke="#5b5560" stroke-width="3.500"/><path d="M2 1l7 7M9 1L2 8" stroke="#fff" stroke-width="2"/></svg></button>
  </div>
  <div class="filter-body">
    <div class="kind">构件类型:柱</div>
    <div class="frame filter-frame">
      <table class="grid g-filter">
        <colgroup><col class="c21"><col class="c61"><col class="c91"><col></colgroup>
        <thead><tr><th></th><th class="purple">可否使用</th><th>构件属性</th><th>属性内容</th></tr></thead>
        <tbody>
          <tr><th class="hot">1</th><td class="pickcell"><input type="checkbox" class="cbx mid" aria-label="截面宽度"></td><td>截面宽度</td><td>=300</td></tr>
          <tr><th>2</th><td><input type="checkbox" class="cbx mid" aria-label="截面高度"></td><td>截面高度</td><td>=400</td></tr>
          <tr><th>3</th><td><input type="checkbox" class="cbx mid" aria-label="截面周长" checked></td><td>截面周长</td><td>&gt;=1201 且 &lt;=1800</td></tr>
          <tr><th>4</th><td><input type="checkbox" class="cbx mid" aria-label="截面面积"></td><td>截面面积</td><td>=0.12</td></tr>
          <tr><th>5</th><td><input type="checkbox" class="cbx mid" aria-label="是否为人防构件"></td><td>是否为人防构件</td><td>否</td></tr>
          <tr><th>6</th><td><input type="checkbox" class="cbx mid" aria-label="砼标号"></td><td>砼标号</td><td>C45</td></tr>
          <tr><th>7</th><td><input type="checkbox" class="cbx mid" aria-label="类别"></td><td>类别</td><td>暗柱</td></tr>
          <tr><th>8</th><td><input type="checkbox" class="cbx mid" aria-label="截面形状" checked></td><td>截面形状</td><td>参数化</td></tr>
          <tr><th>9</th><td><input type="checkbox" class="cbx mid" aria-label="材质"></td><td>材质</td><td>商品混凝土</td></tr>
        </tbody>
      </table>
    </div>
    <div class="filter-foot d-flex">
      <button class="btn push wide me-auto">设置属性(<u>S</u>)</button>
      <button class="btn push go">确定</button>
      <button class="btn push">取消</button>
    </div>
  </div>
</section>

<svg class="sketch" width="1" height="1" aria-hidden="true">
  <g fill="none" stroke="#ff3838" stroke-width="3">
    <path d="M55 68.500h166.500v42.500H55z"/>
    <path d="M603.500 369.500h308v37h-308z"/>
    <path d="M595.500 445.500h256.500v58.500H595.500z"/>
    <path d="M901 454q2 12 1 22 1 7 2.500 10" stroke-width="7.500" stroke-linecap="round"/>
  </g>
  <g fill="#ff3838"><path d="M870 454h5.500v6H870z"/><circle cx="907" cy="502.500" r="4.300"/><path d="M781 555l113.500 46 1.500-3.500L903 608.500l-12 1.500 1.500-4z"/></g>
</svg>

<script src="https://cdn.jsdelivr.net/npm/bootstrap@5.3.0/dist/js/bootstrap.bundle.min.js"></script>
</body>
</html>
